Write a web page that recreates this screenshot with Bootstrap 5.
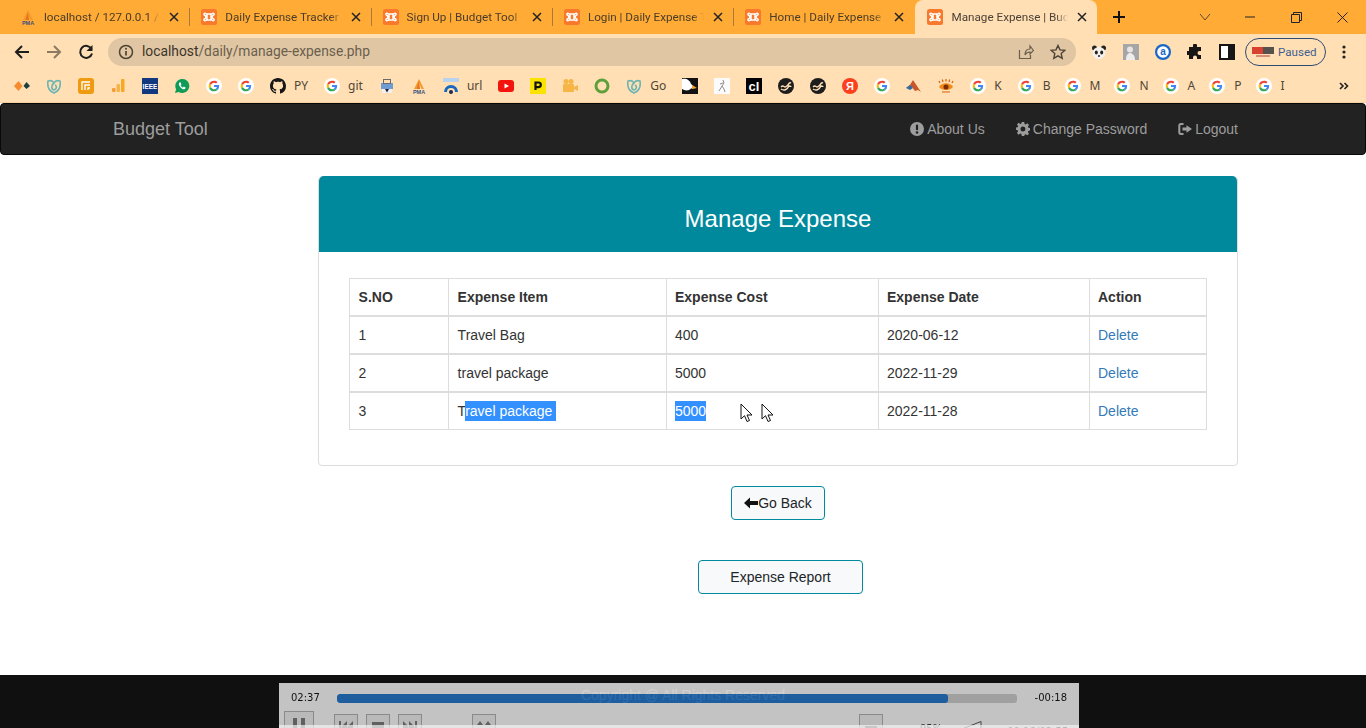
<!DOCTYPE html>
<html lang="en">
<head>
<meta charset="utf-8">
<title>Manage Expense | Budget Tool</title>
<link href="https://cdn.jsdelivr.net/npm/bootstrap@5.3.0/dist/css/bootstrap.min.css" rel="stylesheet">
<style>
html,body{height:728px;overflow:hidden;background:#fff}
body{font-family:"Liberation Sans",Arial,sans-serif;font-size:14px;color:#333;line-height:1.42857}
.ui-font{font-family:Roboto,"Noto Sans",sans-serif}
/* browser chrome */
.tabstrip{height:34px;background:#ffab36;padding-left:8px;color:#4a3c28;font-size:11.7px}
.tabx{width:181.3px;height:34px;padding-left:12px;position:relative}
.tabx + .tabx::before{content:"";position:absolute;left:0;top:8px;height:18px;width:1px;background:#a9793a}
.tabx.is-on{background:#ffdfb3;border-radius:8px 8px 0 0;width:182px;color:#4b4238;margin-left:1px}
.tabx.is-on::before,.is-on + .tabx::before{display:none}
.tab-ico{width:16px;height:16px;flex:none;margin-right:8px}
.tab-text{flex:1 1 0;overflow:hidden;white-space:nowrap;min-width:0;-webkit-mask-image:linear-gradient(90deg,#000 90%,transparent);mask-image:linear-gradient(90deg,#000 90%,transparent)}
.tab-close{width:10px;height:10px;flex:none;margin:0 10px 0 9px}
.plus-ico{width:14px;height:14px;margin-left:15px}
.win-btns{margin-left:auto;width:190px;padding-right:18px;justify-content:flex-end}
.win-chev{margin-right:34px}
.win-min{margin-right:36px}
.win-max{margin-right:35px}
.toolbar{height:36px;background:#ffdfb3;padding-left:6px;padding-right:16px}
.tool-ico{width:16px;height:16px;flex:none}
.tool-slot{width:32px;flex:none;display:flex;justify-content:center}
.omnibox{width:968px;height:28px;border-radius:14px;background:#e0c6a3;margin-left:6px;margin-right:7px;padding:0 10px;color:#4c4336;font-size:13.8px}
.omni-host{color:#3b342a}
.omni-path{color:#6a5f4e}
.omni-info{margin-right:8px}
.omni-share{margin-left:auto;margin-right:16px}
.paused{width:81px;height:28px;border:1.5px solid #2f4a75;border-radius:14px;margin-left:2px;margin-right:16px;color:#3f5f92;font-size:11.6px;padding-left:6px;gap:4px}
.bookmarks{height:33px;background:#ffdfb3;padding-left:6px;color:#4f4638;font-family:"Noto Sans",sans-serif;font-size:12px;border-bottom:1px solid #f1cf9f}
.bk{height:31px;padding:0 8px;gap:8px;flex:none}
.bk-ico{width:16px;height:16px;flex:none}
.bk-w{gap:9px;padding-right:6px}
.bk-more{margin-left:auto;margin-right:17px}
/* site navbar */
.site-nav{height:52px;background:#222;border:1px solid #080808;border-radius:4px;padding:1px 112px 0 97px;margin:0}
.site-brand{font-size:18px;color:#9d9d9d;padding:0 15px;text-decoration:none}
.site-link{color:#9d9d9d;text-decoration:none;padding:0 15px;gap:3px}
.site-link-wide{padding-right:16px}
.nav-ico{width:14px;height:14px;fill:#9d9d9d}
/* main */
.main-area{padding-top:21px}
.exp-card{width:920px;margin-left:318px;border:1px solid #ddd;border-radius:4px;--bs-card-border-color:#ddd}
.exp-head{height:76px;margin-top:-1px;background:#00899c;color:#fff;font-size:24px;border-radius:3px 3px 0 0;border:0;padding:10px 0 0}
.exp-body{padding:26px 30px 35px}
.exp-table{width:857px;table-layout:fixed;margin:0;border-collapse:collapse;color:#333}
.exp-table th,.exp-table td{height:38px;padding:2px 8px 0;border:1px solid #ddd;border-top-width:2px;vertical-align:middle;color:#333}
.exp-table thead th{height:37px;padding-top:3px;border-top-width:1px;font-weight:700}
.exp-table tr > :nth-child(1),.exp-table tr > :nth-child(2){padding-left:8.6px}
.c1{width:99px}.c2{width:218px}.c3{width:212px}.c4{width:211px}.c5{width:117px}
.sel-run{background:#3390ff;color:#fff;display:inline-block;line-height:20px}
.sel-start{margin-left:-1px}
.del-link{color:#337ab7;text-decoration:none}
.act-btn{height:34px;background:#f8f9fa;border:1px solid #00899c;border-radius:4px;color:#212529;font-size:14px;padding:0;line-height:1}
.back-btn{width:94px;margin:20px 0 0 731px;gap:0}
.report-btn{width:165px;margin:40px 0 0 698px}
.back-arrow{width:14px;height:12px}
.cursor-ico{position:absolute;top:403px;width:13px;height:20px}
.cursor-a{left:740px}.cursor-b{left:761px}
/* footer + player */
.site-foot{height:53px;background:#101010;color:#fff;margin-top:auto;text-align:center;padding-top:11px}
.player{position:absolute;left:279px;top:683px;width:800px;height:45px;background:#cfcfcf;opacity:.94;overflow:hidden;font-family:"DejaVu Sans",sans-serif;font-size:10px;color:#111}
.p-row1{height:31px;padding:0 12px}
.p-track{width:681px;height:9px;background:#aaa;border-radius:3px;margin:0 18px 0 17px;overflow:hidden}
.p-fill{height:9px;background:#1f63a8;border-radius:3px}
.p-btn{border:1px solid #929292;background:#c4c4c4;width:24px;height:24px;flex:none;display:flex;justify-content:center;padding-top:5px}
.p-big{width:30px;height:30px;margin:-3px 20px 0 5px}
.p-gap8{margin-right:8px}
.p-gap50{margin-left:50px}
.p-gap-r{margin-left:363px}
.p-glyph{width:16px;height:14px;fill:#666}
.p-row2{height:24px;align-items:flex-start}
.p-vol{margin-left:37px;margin-top:8px;color:#333}
.p-tri{width:30px;height:12px;margin-left:10px;margin-top:7px}
.p-time{margin-left:25px;margin-top:11px;color:#222}
.p-wash{position:absolute;left:0;right:0;top:42px;height:3px;background:rgba(255,255,255,.72)}
</style>
</head>
<body class="d-flex flex-column">
<svg class="d-none" xmlns="http://www.w3.org/2000/svg">
<symbol id="g" viewBox="-12 -12 72 72"><circle cx="24" cy="24" r="36" fill="#fff"/><path fill="#EA4335" d="M24 9.5c3.54 0 6.71 1.22 9.21 3.6l6.85-6.85C35.9 2.38 30.47 0 24 0 14.62 0 6.51 5.38 2.56 13.22l7.98 6.19C12.43 13.72 17.74 9.5 24 9.5z"/><path fill="#4285F4" d="M46.98 24.55c0-1.57-.15-3.09-.38-4.55H24v9.02h12.94c-.58 2.96-2.26 5.48-4.78 7.18l7.73 6c4.51-4.18 7.09-10.36 7.09-17.65z"/><path fill="#FBBC05" d="M10.53 28.59c-.48-1.45-.76-2.99-.76-4.59s.27-3.14.76-4.59l-7.98-6.19C.92 16.46 0 20.12 0 24c0 3.88.92 7.54 2.56 10.78l7.97-6.19z"/><path fill="#34A853" d="M24 48c6.48 0 11.93-2.13 15.89-5.81l-7.73-6c-2.15 1.45-4.92 2.3-8.16 2.3-6.26 0-11.57-4.22-13.47-9.91l-7.98 6.19C6.51 42.62 14.62 48 24 48z"/></symbol>
<symbol id="xampp" viewBox="0 0 16 16"><rect width="16" height="16" rx="2.5" fill="#f9792c"/><path d="M5 5h6M5 11h6M5 5c-2-2-3 1-1 1.500 1 .3 1 2.700 0 3-2 .5-1 3.500 1 1.500M11 5c2-2 3 1 1 1.500-1 .3-1 2.700 0 3 2 .5 1 3.500-1 1.500M6 5.500v5M10 5.500v5" fill="none" stroke="#fff" stroke-width="1.500"/></symbol>
<symbol id="pma" viewBox="0 0 16 16"><path d="M8 1 3 11h2.500L8 5l2.500 6H13z" fill="#f29a2b"/><path d="M5.500 11 8 3l1 8z" fill="#e8701a"/><text x="8" y="15.500" font-size="5.500" font-weight="700" text-anchor="middle" fill="#3d4f7c" font-family="Liberation Sans">PMA</text></symbol>
<symbol id="vine" viewBox="0 0 16 16"><path d="M8 15C3 13 1 9 2 3c3-1 5 0 6 2 1-2 3-3 6-2 1 6-1 10-6 12zM8 5C5 7 5 11 8 12c3-1 3-4 1-5" fill="none" stroke="#6cb4b4" stroke-width="1.600"/></symbol>
<symbol id="shield" viewBox="0 0 16 16"><circle cx="8" cy="8" r="8" fill="#1d1d1d"/><path d="M3 9c3-3 3 2 6-1s2-4 4-3M3 11c3 2 6 1 8-3 1 0 2 0 2 1" fill="none" stroke="#ffdfb3" stroke-width="1.500"/></symbol>
<symbol id="circ-i" viewBox="0 0 14 14"><circle cx="7" cy="7" r="7"/><rect x="5.900" y="2.600" width="2.200" height="5.600" rx="1" fill="#222"/><circle cx="7" cy="10.500" r="1.300" fill="#222"/></symbol>
<symbol id="cog" viewBox="0 0 14 14"><path fill-rule="evenodd" d="M5.800 0h2.400l.4 1.900 1.100.5L11.400 1.300 13 3l-1.100 1.600.5 1.200 1.900.3v2.400l-1.900.4-.5 1.100 1.100 1.700-1.600 1.600-1.700-1.100-1.100.5L8.200 14H5.800l-.4-1.900-1.100-.5-1.700 1.100L1 11l1.100-1.700-.5-1.100L-.3 7.800V5.500l1.900-.3.5-1.200L1 2.400 2.600.8l1.700 1.100 1.100-.5zM7 4.500a2.500 2.500 0 1 0 0 5 2.500 2.500 0 0 0 0-5z"/></symbol>
<symbol id="logout" viewBox="0 0 14 14"><path d="M5.500 1H3C1.300 1 .3 2 .3 3.700v6.600C.3 12 1.300 13 3 13h2.500v-2H3.300c-.6 0-1-.4-1-1V4c0-.6.4-1 1-1h2.200z"/><path d="M8.500 3.200 14 7l-5.500 3.800V8.500H4.500v-3h4z"/></symbol>
</svg>

<div class="tabstrip d-flex align-items-center ui-font">
  <div class="tabx d-flex align-items-center"><svg class="tab-ico"><use href="#pma"/></svg><span class="tab-text">localhost / 127.0.0.1 / </span><svg class="tab-close" viewBox="0 0 10 10"><path d="M1 1l8 8M9 1l-8 8" stroke="#222" stroke-width="1.500"/></svg></div>
  <div class="tabx d-flex align-items-center"><svg class="tab-ico"><use href="#xampp"/></svg><span class="tab-text">Daily Expense Tracker</span><svg class="tab-close" viewBox="0 0 10 10"><path d="M1 1l8 8M9 1l-8 8" stroke="#222" stroke-width="1.500"/></svg></div>
  <div class="tabx d-flex align-items-center"><svg class="tab-ico"><use href="#xampp"/></svg><span class="tab-text">Sign Up | Budget Tool</span><svg class="tab-close" viewBox="0 0 10 10"><path d="M1 1l8 8M9 1l-8 8" stroke="#222" stroke-width="1.500"/></svg></div>
  <div class="tabx d-flex align-items-center"><svg class="tab-ico"><use href="#xampp"/></svg><span class="tab-text">Login | Daily Expense Tracker</span><svg class="tab-close" viewBox="0 0 10 10"><path d="M1 1l8 8M9 1l-8 8" stroke="#222" stroke-width="1.500"/></svg></div>
  <div class="tabx d-flex align-items-center"><svg class="tab-ico"><use href="#xampp"/></svg><span class="tab-text">Home | Daily Expense Tracker</span><svg class="tab-close" viewBox="0 0 10 10"><path d="M1 1l8 8M9 1l-8 8" stroke="#222" stroke-width="1.500"/></svg></div>
  <div class="tabx is-on d-flex align-items-center"><svg class="tab-ico"><use href="#xampp"/></svg><span class="tab-text">Manage Expense | Budget Tool</span><svg class="tab-close" viewBox="0 0 10 10"><path d="M1 1l8 8M9 1l-8 8" stroke="#222" stroke-width="1.500"/></svg></div>
  <svg class="plus-ico" viewBox="0 0 14 14"><path d="M7 1v12M1 7h12" stroke="#111" stroke-width="2"/></svg>
  <div class="win-btns d-flex align-items-center">
    <svg class="win-chev" width="12" height="8" viewBox="0 0 12 8"><path d="M1 1l5 6 5-6" fill="none" stroke="#5b4a30" stroke-width="1"/></svg>
    <svg class="win-min" width="10" height="2" viewBox="0 0 10 2"><path d="M0 1h10" stroke="#222"/></svg>
    <svg class="win-max" width="11" height="11" viewBox="0 0 11 11"><path d="M.5 2.500h8v8h-8zM2.500 2.500v-2h8v8h-2" fill="none" stroke="#222"/></svg>
    <svg width="11" height="11" viewBox="0 0 11 11"><path d="M.5.500l10 10M10.500.500l-10 10" stroke="#222"/></svg>
  </div>
</div>

<div class="toolbar d-flex align-items-center ui-font">
  <span class="tool-slot"><svg class="tool-ico" viewBox="0 0 16 16"><path d="M15 8H2M8 2 2 8l6 6" fill="none" stroke="#1e1e1e" stroke-width="2"/></svg></span>
  <span class="tool-slot"><svg class="tool-ico" viewBox="0 0 16 16"><path d="M1 8h13M8 2l6 6-6 6" fill="none" stroke="#8b7b63" stroke-width="2"/></svg></span>
  <span class="tool-slot"><svg class="tool-ico" viewBox="0 0 16 16"><path d="M13.500 5A6 6 0 1 0 14 9.500" fill="none" stroke="#1e1e1e" stroke-width="2"/><path d="M14.500 1v6h-6z" fill="#1e1e1e"/></svg></span>
  <div class="omnibox d-flex align-items-center">
    <svg class="tool-ico omni-info" viewBox="0 0 16 16"><circle cx="8" cy="8" r="6.500" fill="none" stroke="#4c4336" stroke-width="1.500"/><path d="M8 7v4.500" stroke="#4c4336" stroke-width="1.700"/><circle cx="8" cy="4.800" r="1" fill="#4c4336"/></svg>
    <span><span class="omni-host">localhost</span><span class="omni-path">/daily/manage-expense.php</span></span>
    <svg class="tool-ico omni-share" viewBox="0 0 16 16"><path d="M1.500 6v8.500h11V11M7 11c0-4 2-6 5-6V2l3.500 4.500L12 10V8c-2 0-4 .8-5 3z" fill="none" stroke="#6a5f4e" stroke-width="1.200"/></svg>
    <svg class="tool-ico" viewBox="0 0 16 16"><path d="M8 1.500l2 4.400 4.800.5-3.600 3.200 1 4.700L8 11.900l-4.200 2.400 1-4.700L1.200 6.400 6 5.900z" fill="none" stroke="#4c4336" stroke-width="1.400"/></svg>
  </div>
  <span class="tool-slot"><svg class="tool-ico" viewBox="0 0 16 16"><circle cx="3.500" cy="4" r="2.500" fill="#222"/><circle cx="12.500" cy="4" r="2.500" fill="#222"/><ellipse cx="8" cy="9" rx="6.500" ry="6" fill="#f4f1ec"/><ellipse cx="5.300" cy="8.500" rx="1.500" ry="2" fill="#222"/><ellipse cx="10.700" cy="8.500" rx="1.500" ry="2" fill="#222"/><circle cx="8" cy="12" r="1" fill="#222"/></svg></span>
  <span class="tool-slot"><svg class="tool-ico" viewBox="0 0 16 16"><rect width="16" height="16" fill="#a6a6a6"/><circle cx="7" cy="5.500" r="3" fill="#e8e4e4"/><path d="M3 16c0-5 2-7 4-7s5 2 5 7z" fill="#ededed"/></svg></span>
  <span class="tool-slot"><svg class="tool-ico" viewBox="0 0 16 16"><circle cx="8" cy="8" r="8" fill="#1a66c9"/><circle cx="8" cy="8" r="5.800" fill="#fff"/><text x="8" y="11.300" font-size="10" font-weight="700" text-anchor="middle" fill="#1a66c9" font-family="Liberation Sans">a</text></svg></span>
  <span class="tool-slot"><svg class="tool-ico" viewBox="0 0 16 16"><path d="M6 1.500a2 2 0 0 1 4 0V3h4v4h-1.500a2 2 0 0 0 0 4H14v4h-4v-1.500a2 2 0 0 0-4 0V15H2v-4H.5a2 2 0 0 1 0-4H2V3h4z" fill="#161616"/></svg></span>
  <span class="tool-slot"><svg class="tool-ico" viewBox="0 0 16 16"><rect x="1" y="1" width="14" height="14" fill="#fff" stroke="#161616" stroke-width="2"/><rect x="9" y="1" width="6" height="14" fill="#161616"/></svg></span>
  <div class="paused d-flex align-items-center">
    <svg width="22" height="12" viewBox="0 0 22 12"><rect y="1" width="11" height="7" fill="#d8412f"/><rect x="11" y="1" width="11" height="7" fill="#55524e"/><rect x="4" y="9" width="14" height="2" fill="#d88d7a"/></svg>
    <span>Paused</span>
  </div>
  <svg width="4" height="14" viewBox="0 0 4 14"><circle cx="2" cy="2" r="1.600" fill="#222"/><circle cx="2" cy="7" r="1.600" fill="#222"/><circle cx="2" cy="12" r="1.600" fill="#222"/></svg>
</div>

<div class="bookmarks d-flex align-items-center">
  <span class="bk d-flex align-items-center"><svg class="bk-ico" viewBox="0 0 16 16"><path d="M0 8l4.500-5 4 5-4 5z" fill="#f78b2d"/><path d="M9.500 8l3-4 3.500 4-3.500 3z" fill="#1e3d3d"/></svg></span>
  <span class="bk d-flex align-items-center"><svg class="bk-ico"><use href="#vine"/></svg></span>
  <span class="bk d-flex align-items-center"><svg class="bk-ico" viewBox="0 0 16 16"><rect width="16" height="16" rx="3" fill="#ee9b12"/><path d="M4 12V4h8M7 12V7h5M10 12v-2h2" fill="none" stroke="#fff" stroke-width="1.300"/></svg></span>
  <span class="bk d-flex align-items-center"><svg class="bk-ico" viewBox="0 0 16 16"><rect x="2" y="10" width="3.500" height="4" rx="1" fill="#f49d35"/><rect x="6.500" y="6" width="3.500" height="8" rx="1" fill="#f7b24a"/><rect x="11" y="1" width="3.500" height="13" rx="1" fill="#f7a823"/></svg></span>
  <span class="bk d-flex align-items-center"><svg class="bk-ico" viewBox="0 0 16 16"><rect width="16" height="16" fill="#12387f"/><text x="8" y="10.500" font-size="6.500" font-weight="700" text-anchor="middle" fill="#fff" font-family="Liberation Sans">IEEE</text></svg></span>
  <span class="bk d-flex align-items-center"><svg class="bk-ico" viewBox="0 0 16 16"><path d="M1 15l1.100-3.800A7 7 0 1 1 4.800 14z" fill="#0d9d58"/><path d="M5.500 4.500c-1 1-.8 2.700.7 4.500 1.500 1.700 3 2.600 4.300 2.200.8-.3 1.300-1.200 1-1.600l-1.700-1-.9.900c-1-.4-1.900-1.300-2.300-2.300l.8-.9-.8-1.800c-.3-.3-.7-.3-1.100 0z" fill="#fff"/></svg></span>
  <span class="bk d-flex align-items-center"><svg class="bk-ico"><use href="#g"/></svg></span>
  <span class="bk d-flex align-items-center"><svg class="bk-ico"><use href="#g"/></svg></span>
  <span class="bk d-flex align-items-center"><svg class="bk-ico" viewBox="0 0 16 16"><path fill="#161616" d="M8 0C3.580 0 0 3.580 0 8c0 3.540 2.290 6.530 5.470 7.590.4.070.55-.17.55-.38 0-.19-.01-.82-.01-1.490-2.010.37-2.530-.49-2.690-.94-.09-.23-.48-.94-.82-1.130-.28-.15-.68-.52-.01-.53.63-.01 1.080.58 1.230.82.72 1.210 1.870.87 2.330.66.07-.52.28-.87.51-1.070-1.780-.2-3.640-.89-3.640-3.950 0-.87.31-1.590.82-2.150-.08-.2-.36-1.020.08-2.120 0 0 .67-.21 2.200.82.64-.18 1.320-.27 2-.27.68 0 1.360.09 2 .27 1.530-1.040 2.200-.82 2.200-.82.44 1.100.16 1.920.08 2.120.51.56.82 1.270.82 2.150 0 3.070-1.870 3.750-3.650 3.950.29.25.54.73.54 1.480 0 1.070-.01 1.930-.01 2.200 0 .21.15.46.55.38A8.013 8.013 0 0016 8c0-4.420-3.580-8-8-8z"/></svg><span>PY</span></span>
  <span class="bk d-flex align-items-center"><svg class="bk-ico"><use href="#g"/></svg><span>git</span></span>
  <span class="bk d-flex align-items-center"><svg class="bk-ico" viewBox="0 0 16 16"><rect x="2" y="5" width="12" height="6" fill="#6f9bd4"/><rect x="4.500" y="1.500" width="7" height="4" fill="none" stroke="#6b6b6b"/><rect x="3" y="11" width="10" height="4" fill="#f0f0f0"/><path d="M6 11l2 3.500 2-3.500z" fill="#223"/></svg></span>
  <span class="bk d-flex align-items-center"><svg class="bk-ico"><use href="#pma"/></svg></span>
  <span class="bk d-flex align-items-center"><svg class="bk-ico" viewBox="0 0 16 16"><rect width="16" height="4" fill="#b9d2ef"/><path d="M1 14a7 7 0 0 1 14 0h-3a4 4 0 0 0-8 0z" fill="#1767c0"/><circle cx="8" cy="14" r="2" fill="#1c2b4a"/></svg><span>url</span></span>
  <span class="bk d-flex align-items-center"><svg class="bk-ico" viewBox="0 0 16 16"><rect y="2" width="16" height="12" rx="3" fill="#f4140e"/><path d="M6.500 5.500 11 8l-4.500 2.500z" fill="#fff"/></svg></span>
  <span class="bk d-flex align-items-center"><svg class="bk-ico" viewBox="0 0 16 16"><rect width="16" height="16" fill="#fbe300"/><path d="M5.500 12V4.500h3a2.300 2.300 0 0 1 0 4.600h-3" fill="none" stroke="#111" stroke-width="2.200"/></svg></span>
  <span class="bk d-flex align-items-center"><svg class="bk-ico" viewBox="0 0 16 16"><circle cx="4" cy="3.500" r="2.500" fill="#f6b545"/><circle cx="9" cy="3.500" r="2.500" fill="#f6b545"/><rect x="1" y="6" width="11" height="8" rx="1" fill="#f6b545"/><path d="M12 9l4-2v6l-4-2z" fill="#f6b545"/></svg></span>
  <span class="bk d-flex align-items-center"><svg class="bk-ico" viewBox="0 0 16 16"><circle cx="8" cy="8" r="6" fill="none" stroke="#5da03b" stroke-width="3"/></svg></span>
  <span class="bk d-flex align-items-center"><svg class="bk-ico"><use href="#vine"/></svg><span>Go</span></span>
  <span class="bk d-flex align-items-center"><svg class="bk-ico" viewBox="0 0 16 16"><rect width="16" height="16" fill="#111"/><path d="M0 1c4-1 8 1 9 5l5 4-5 .5C7 13 3 13 0 11z" fill="#fff"/><path d="M10 7l5 3-5 1z" fill="#eda226"/></svg></span>
  <span class="bk d-flex align-items-center"><svg class="bk-ico" viewBox="0 0 16 16"><rect width="16" height="16" fill="#fbfbfb"/><path d="M9 2l1 3-2 3 2 3 1 3M8 8l-3 5M9 5l-3 1" fill="none" stroke="#8d8d8d" stroke-width="1"/></svg></span>
  <span class="bk d-flex align-items-center"><svg class="bk-ico" viewBox="0 0 16 16"><rect width="16" height="16" fill="#000"/><text x="8" y="13" font-size="13" font-weight="700" text-anchor="middle" fill="#fff" font-family="Liberation Sans">cl</text></svg></span>
  <span class="bk d-flex align-items-center"><svg class="bk-ico"><use href="#shield"/></svg></span>
  <span class="bk d-flex align-items-center"><svg class="bk-ico"><use href="#shield"/></svg></span>
  <span class="bk d-flex align-items-center"><svg class="bk-ico" viewBox="0 0 16 16"><circle cx="8" cy="8" r="8" fill="#fc3f1d"/><text x="8" y="12" font-size="11" font-weight="700" text-anchor="middle" fill="#fff" font-family="Liberation Sans">Я</text></svg></span>
  <span class="bk d-flex align-items-center"><svg class="bk-ico"><use href="#g"/></svg></span>
  <span class="bk d-flex align-items-center"><svg class="bk-ico" viewBox="0 0 16 16"><path d="M0 10l4-3 3-5 2 3 6 9-3-2-3 1-3-4z" fill="#c8562a"/><path d="M0 10l4-3 3 3-3 2z" fill="#2e6da8"/></svg></span>
  <span class="bk d-flex align-items-center"><svg class="bk-ico" viewBox="0 0 16 16"><path d="M1 9c3-5 11-5 14 0-3 4-11 4-14 0z" fill="#ef8a18"/><circle cx="8" cy="9" r="2.500" fill="#7a2e06"/><path d="M2 5 1 3M5 4 4.300 1.500M8 3.500V1M11 4l.7-2.500M14 5l1-2M4 14h8" stroke="#d8630f" stroke-width="1.200"/></svg></span>
  <span class="bk d-flex align-items-center"><svg class="bk-ico"><use href="#g"/></svg><span>K</span></span>
  <span class="bk d-flex align-items-center bk-w"><svg class="bk-ico"><use href="#g"/></svg><span>B</span></span>
  <span class="bk d-flex align-items-center bk-w"><svg class="bk-ico"><use href="#g"/></svg><span>M</span></span>
  <span class="bk d-flex align-items-center bk-w"><svg class="bk-ico"><use href="#g"/></svg><span>N</span></span>
  <span class="bk d-flex align-items-center bk-w"><svg class="bk-ico"><use href="#g"/></svg><span>A</span></span>
  <span class="bk d-flex align-items-center bk-w"><svg class="bk-ico"><use href="#g"/></svg><span>P</span></span>
  <span class="bk d-flex align-items-center bk-w"><svg class="bk-ico"><use href="#g"/></svg><span>I</span></span>
  <svg class="bk-more" width="10" height="8" viewBox="0 0 10 8"><path d="M1 1l3 3-3 3M5.500 1l3 3-3 3" fill="none" stroke="#222" stroke-width="1.600"/></svg>
</div>

<nav class="site-nav d-flex align-items-center justify-content-between">
  <a class="site-brand" href="#">Budget Tool</a>
  <div class="d-flex">
    <a class="site-link site-link-wide d-flex align-items-center" href="#"><svg class="nav-ico"><use href="#circ-i"/></svg>About Us</a>
    <a class="site-link site-link-wide d-flex align-items-center" href="#"><svg class="nav-ico"><use href="#cog"/></svg>Change Password</a>
    <a class="site-link d-flex align-items-center" href="#"><svg class="nav-ico"><use href="#logout"/></svg>Logout</a>
  </div>
</nav>

<main class="main-area">
  <div class="card exp-card">
    <div class="card-header exp-head d-flex align-items-center justify-content-center">Manage Expense</div>
    <div class="card-body exp-body">
      <table class="table exp-table">
        <colgroup><col class="c1"><col class="c2"><col class="c3"><col class="c4"><col class="c5"></colgroup>
        <thead><tr><th>S.NO</th><th>Expense Item</th><th>Expense Cost</th><th>Expense Date</th><th>Action</th></tr></thead>
        <tbody>
          <tr><td>1</td><td>Travel Bag</td><td>400</td><td>2020-06-12</td><td><a class="del-link" href="#">Delete</a></td></tr>
          <tr><td>2</td><td>travel package</td><td>5000</td><td>2022-11-29</td><td><a class="del-link" href="#">Delete</a></td></tr>
          <tr><td>3</td><td>T<span class="sel-run sel-start">ravel package&nbsp;</span></td><td><span class="sel-run">5000</span></td><td>2022-11-28</td><td><a class="del-link" href="#">Delete</a></td></tr>
        </tbody>
      </table>
    </div>
  </div>
  <button type="button" class="btn act-btn back-btn d-flex align-items-center justify-content-center"><svg class="back-arrow" viewBox="0 0 14 12"><path d="M0 6l6-5.500V4h8v4H6v3.500z" fill="#111"/></svg>Go Back</button>
  <button type="button" class="btn act-btn report-btn d-block">Expense Report</button>
</main>

<footer class="site-foot">Copyright @ All Rights Reserved</footer>

<svg class="cursor-ico cursor-a" viewBox="0 0 13 20"><path d="M1 1v15l3.500-3.300L7 18.500l2.500-1-2.500-5.500h5z" fill="#fff" stroke="#111"/></svg>
<svg class="cursor-ico cursor-b" viewBox="0 0 13 20"><path d="M1 1v15l3.500-3.300L7 18.500l2.500-1-2.500-5.500h5z" fill="#fff" stroke="#111"/></svg>

<div class="player">
  <div class="p-row1 d-flex align-items-center">
    <span>02:37</span>
    <div class="p-track"><div class="p-fill" style="width:89.9%"></div></div>
    <span>-00:18</span>
  </div>
  <div class="p-row2 d-flex">
    <span class="p-btn p-big"><svg class="p-glyph" viewBox="0 0 16 14"><rect x="2" y="1" width="4" height="13"/><rect x="10" y="1" width="4" height="13"/></svg></span>
    <span class="p-btn p-gap8"><svg class="p-glyph" viewBox="0 0 16 14"><path d="M1 1h2v12H1zM9 1v12L3 7zM15 1v12L9 7z"/></svg></span>
    <span class="p-btn p-gap8"><svg class="p-glyph" viewBox="0 0 16 14"><rect x="2" y="2" width="12" height="11"/></svg></span>
    <span class="p-btn"><svg class="p-glyph" viewBox="0 0 16 14"><path d="M13 1h2v12h-2zM7 1v12l6-6zM1 1v12l6-6z"/></svg></span>
    <span class="p-btn p-gap50 "><svg class="p-glyph" viewBox="0 0 16 14"><path d="M4 1l3 4H1zM12 1l3 4H9z"/></svg></span>
    <span class="p-btn p-gap-r"><svg class="p-glyph" viewBox="0 0 16 14"><path d="M2 6h12v2H2z"/></svg></span>
    <span class="p-vol">95%</span>
    <svg class="p-tri" viewBox="0 0 30 12"><path d="M0 12 29 .5V12z" fill="#d8d8d8" stroke="#444"/><path d="M0 12 12 8v4z" fill="#37b24d"/></svg>
    <span class="p-time">00:18/02:55</span>
  </div>
  <div class="p-wash"></div>
</div>
<script src="https://cdn.jsdelivr.net/npm/bootstrap@5.3.0/dist/js/bootstrap.bundle.min.js"></script>
</body>
</html>
